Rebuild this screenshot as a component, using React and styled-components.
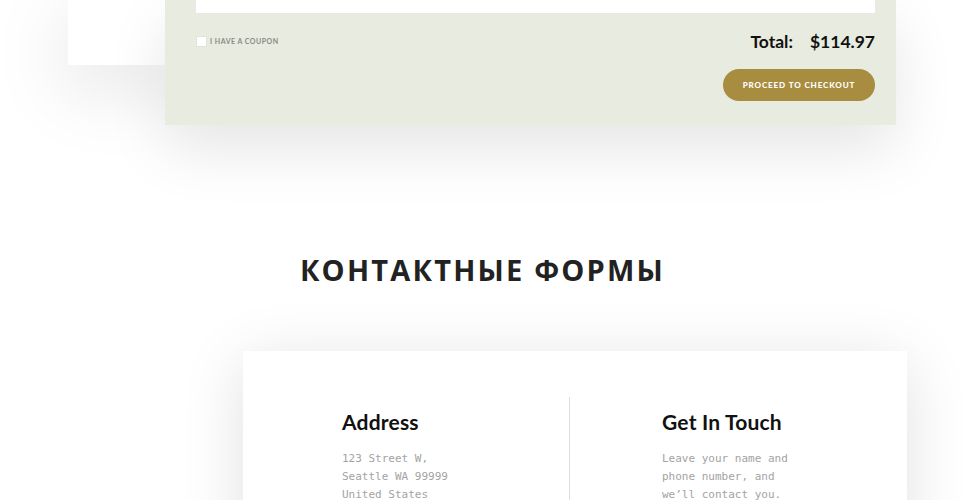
import styled, { createGlobalStyle } from "styled-components";

const GlobalStyle = createGlobalStyle`
  html, body {
    margin: 0;
    padding: 0;
    background: #ffffff;
    overflow: hidden;
  }
  body {
    font-family: "Lato", "Liberation Sans", sans-serif;
  }
`;

const Page = styled.div`
  width: 965px;
  height: 500px;
  overflow: hidden;
`;

const CartArea = styled.div`
  display: flex;
  align-items: flex-start;
  padding-left: 68px;
`;

const BackCard = styled.div`
  width: 97px;
  height: 65px;
  background: #ffffff;
  box-shadow: 0 20px 80px rgba(0, 0, 0, 0.13);
`;

const Summary = styled.div`
  position: relative;
  width: 731px;
  height: 125px;
  box-sizing: border-box;
  padding: 0 21px 24px 31px;
  background: #e8ebdf;
  box-shadow: 0 25px 60px rgba(0, 0, 0, 0.1);
  display: flex;
  flex-direction: column;
`;

const FieldEnd = styled.div`
  height: 13px;
  background: #ffffff;
`;

const SummaryRow = styled.div`
  height: 30px;
  margin-top: 13px;
  display: flex;
  align-items: center;
  justify-content: space-between;
`;

const Coupon = styled.label`
  display: flex;
  align-items: center;
  gap: 3px;
  font-family: "Lato", sans-serif;
  font-size: 7px;
  font-weight: 700;
  letter-spacing: 0.5px;
  text-transform: uppercase;
  color: #8a8a84;
`;

const Check = styled.span`
  width: 9px;
  height: 9px;
  background: #ffffff;
  border: 1px solid #e0e2d8;
  border-radius: 1px;
`;

const Total = styled.div`
  display: flex;
  gap: 17px;
  font-family: "Lato", sans-serif;
  font-size: 17.5px;
  font-weight: 700;
  color: #111111;
`;

const Actions = styled.div`
  display: flex;
  justify-content: flex-end;
  margin-top: auto;
`;

const CheckoutButton = styled.button`
  width: 152px;
  height: 32px;
  border: none;
  border-radius: 16px;
  background: #a88d40;
  color: #ffffff;
  font-family: "Lato", sans-serif;
  font-size: 8px;
  font-weight: 900;
  letter-spacing: 0.9px;
  text-transform: uppercase;
  cursor: pointer;
`;

const SectionTitle = styled.h2`
  margin: 125px 0 0;
  height: 40px;
  line-height: 40px;
  text-align: center;
  font-family: "Open Sans", sans-serif;
  font-size: 29px;
  font-weight: 700;
  letter-spacing: 2.2px;
  color: #222222;
`;

const ContactCard = styled.div`
  margin: 61px 0 0 243px;
  width: 664px;
  height: 200px;
  box-sizing: border-box;
  padding-top: 46px;
  background: #ffffff;
  box-shadow: 0 10px 60px rgba(0, 0, 0, 0.12);
  display: grid;
  grid-template-columns: 326px 1fr;
`;

const Column = styled.div`
  padding: 12px 0 0 ${(p) => p.$indent}px;
  border-left: ${(p) => (p.$divided ? "1px solid #dddddd" : "none")};
`;

const ColumnTitle = styled.h3`
  margin: 0;
  line-height: 26px;
  font-family: "Lato", sans-serif;
  font-size: 21px;
  font-weight: 700;
  letter-spacing: 0.2px;
  color: #111111;
`;

const ColumnText = styled.p`
  margin: 15px 0 0;
  font-family: "DejaVu Sans Mono", "Liberation Mono", monospace;
  font-size: 11px;
  line-height: 18px;
  color: #a3a3a3;
`;

export default function App() {
  return (
    <Page>
      <GlobalStyle />
      <CartArea>
        <BackCard />
        <Summary>
          <FieldEnd />
          <SummaryRow>
            <Coupon>
              <Check />I have a coupon
            </Coupon>
            <Total>
              <span>Total:</span>
              <span>$114.97</span>
            </Total>
          </SummaryRow>
          <Actions>
            <CheckoutButton>Proceed to checkout</CheckoutButton>
          </Actions>
        </Summary>
      </CartArea>

      <SectionTitle>КОНТАКТНЫЕ ФОРМЫ</SectionTitle>

      <ContactCard>
        <Column $indent={99}>
          <ColumnTitle>Address</ColumnTitle>
          <ColumnText>
            123 Street W,
            <br />
            Seattle WA 99999
            <br />
            United States
          </ColumnText>
        </Column>
        <Column $indent={92} $divided>
          <ColumnTitle>Get In Touch</ColumnTitle>
          <ColumnText>
            Leave your name and
            <br />
            phone number, and
            <br />
            we’ll contact you.
          </ColumnText>
        </Column>
      </ContactCard>
    </Page>
  );
}
